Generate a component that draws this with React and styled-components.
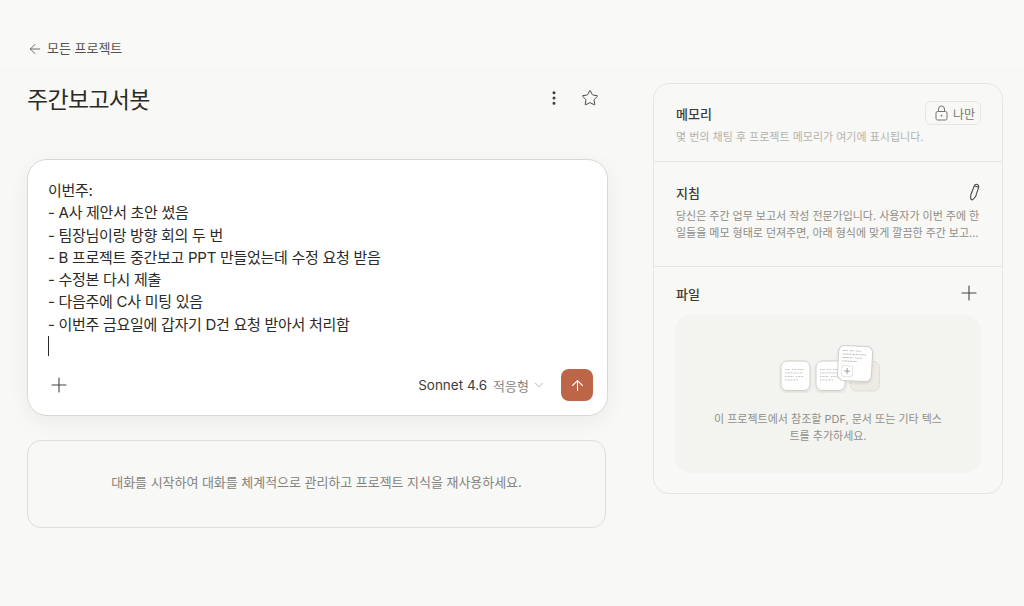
import React from "react";
import styled, { createGlobalStyle } from "styled-components";
import { ArrowLeft, MoreVertical, Star, Plus, ChevronDown, ArrowUp } from "lucide-react";

const Global = createGlobalStyle`
  html, body { margin: 0; padding: 0; background: #f8f8f6; overflow: hidden; }
  body { font-family: "Inter", "Noto Sans CJK KR", sans-serif; color: #2b2a27; }
  * { box-sizing: border-box; }
`;

const Page = styled.div`
  width: 1024px;
  height: 606px;
  overflow: hidden;
  background: #f8f8f6;
`;
const TopBar = styled.div`
  height: 68px;
  padding: 40px 27px 0 27px;
  background: #f9f9f7;
`;
const BackLink = styled.a`
  display: inline-flex;
  align-items: center;
  gap: 4px;
  font-size: 13px;
  line-height: 17px;
  letter-spacing: -0.02px;
  color: #55534e;
`;
const Columns = styled.div`
  display: grid;
  grid-template-columns: 581px 350px;
  column-gap: 45px;
  padding: 0 21px 0 27px;
  align-items: start;
`;
const Main = styled.main`
  display: flex;
  flex-direction: column;
  padding-top: 17px;
`;
const TitleRow = styled.div`
  display: flex;
  align-items: center;
  justify-content: space-between;
  height: 30px;
  margin-bottom: 44px;
`;
const Title = styled.h1`
  margin: 0;
  font-size: 23px;
  line-height: 30px;
  font-weight: 400;
  letter-spacing: -0.7px;
  color: #2b2a27;
`;
const TitleActions = styled.div`
  display: flex;
  align-items: center;
  gap: 18px;
  padding: 0 9px 4px 0;
  color: #3d3c38;
`;
const Composer = styled.section`
  height: 257px;
  background: #fff;
  border: 1px solid #d9d8d3;
  border-radius: 20px;
  box-shadow: 0 6px 22px rgba(0, 0, 0, 0.055);
  padding: 20px 14px 14px 20px;
  display: flex;
  flex-direction: column;
  justify-content: space-between;
`;
const Draft = styled.div`
  font-size: 15px;
  line-height: 22.3px;
  letter-spacing: -0.28px;
  color: #2b2a27;
  white-space: pre-line;
`;
const Caret = styled.span`
  display: block;
  width: 1px;
  height: 20px;
  background: #2b2a27;
`;
const ComposerBar = styled.div`
  display: flex;
  align-items: center;
  justify-content: space-between;
`;
const BarButton = styled.span`
  display: flex;
  margin-left: -1px;
  color: #45443f;
`;
const ModelGroup = styled.div`
  display: flex;
  align-items: center;
`;
const ModelName = styled.span`
  font-size: 13.5px;
  color: #3d3c38;
`;
const ModelMode = styled.span`
  font-size: 13px;
  color: #85837c;
  margin-left: 6px;
`;
const Chevron = styled.span`
  display: flex;
  color: #8b8982;
  margin: 0 15px 0 3px;
`;
const Send = styled.span`
  width: 32px;
  height: 32px;
  border-radius: 8px;
  background: #bd6647;
  color: #fff;
  display: flex;
  align-items: center;
  justify-content: center;
`;
const EmptyChats = styled.div`
  width: 579px;
  height: 88px;
  margin-top: 24px;
  padding-bottom: 5px;
  border: 1px solid #dfdeda;
  border-radius: 14px;
  display: flex;
  align-items: center;
  justify-content: center;
  font-size: 13px;
  letter-spacing: -0.04px;
  color: #85837c;
`;
const Panel = styled.aside`
  margin-top: 15px;
  height: 411px;
  border: 1px solid #e6e5e1;
  border-radius: 16px;
`;
const Section = styled.div`
  height: ${(p) => p.$h}px;
  padding: ${(p) => p.$pt}px 21px 0 22px;
  border-bottom: ${(p) => (p.$last ? "none" : "1px solid #e6e5e1")};
`;
const SectionHead = styled.div`
  display: flex;
  align-items: center;
  justify-content: space-between;
  height: 24px;
`;
const SectionTitle = styled.h2`
  margin: 0;
  font-size: 13px;
  font-weight: 500;
  color: #3d3c38;
`;
const Hint = styled.p`
  margin: 4px 0 0;
  font-size: 11px;
  line-height: 17px;
  color: #b5b3ac;
`;
const Instruction = styled.p`
  margin: 4px 0 0;
  font-size: 11px;
  line-height: 17px;
  letter-spacing: -0.03px;
  color: #8f8d86;
`;
const Badge = styled.span`
  display: flex;
  align-items: center;
  gap: 4px;
  height: 24px;
  width: 56px;
  padding-left: 8px;
  border: 1px solid #e6e5e1;
  border-radius: 6px;
  font-size: 12px;
  color: #77756e;
`;
const IconBtn = styled.span`
  display: flex;
  color: #45443f;
`;
const Dropzone = styled.div`
  height: 158px;
  margin: 10px 0 0 -1px;
  border-radius: 16px;
  background: #f3f3ef;
  display: flex;
  flex-direction: column;
  align-items: center;
  padding: 30px 0 0 0;
`;
const ArtWrap = styled.div`
  display: flex;
  padding-left: 4px;
`;
const DropText = styled.p`
  margin: 18px 0 0;
  width: 232px;
  text-align: center;
  font-size: 11px;
  line-height: 17px;
  color: #92908a;
`;

const LockIcon = () => (
  <svg width="15" height="16" viewBox="0 0 15 16" fill="none" stroke="currentColor" strokeWidth="1">
    <rect x="2" y="6.500" width="11" height="8.500" rx="1.500" />
    <path d="M4.500 6.500V4a3 3 0 0 1 6 0v2.500" />
    <circle cx="7.500" cy="10.700" r=".9" fill="currentColor" stroke="none" />
  </svg>
);

const PencilIcon = () => (
  <svg width="14" height="18" viewBox="0 0 14 18" fill="none" stroke="currentColor" strokeWidth="1.050" strokeLinejoin="round">
    <path d="M7.300 2.700c.5-1.100 1.700-1.600 2.900-1.200 1.200.4 1.800 1.600 1.400 2.800L8.600 13.600 5.400 17 3.700 16 3.800 11.800z" />
    <path d="M7.300 2.700l4.300 1.600" />
  </svg>
);

const DocLines = ({ x, y }) => (
  <g transform={`translate(${x} ${y})`}>
    <rect width="29" height="29.500" rx="6" fill="#fff" stroke="#cfcec9" strokeWidth="1" />
    <path d="M4 8.500h5M11 8.500h4M17 8.500h6M4 12h18M4 15.500h9M15 15.500h7M4 19h13" stroke="#c4c2bc" strokeWidth="1" strokeDasharray="1 .5" />
  </g>
);

const FilesArt = () => (
  <svg width="102" height="48" viewBox="0 0 102 48" fill="none">
    <defs>
      <filter id="s" x="-30%" y="-30%" width="160%" height="160%">
        <feDropShadow dx="0" dy="1.500" stdDeviation="1.800" floodOpacity="0.1" />
      </filter>
    </defs>
    <rect x="71.500" y="16.500" width="29" height="29.500" rx="6" fill="#eeebe5" stroke="#cfcdc6" strokeDasharray="1 1" />
    <g filter="url(#s)">
      <DocLines x={2} y={16} />
      <DocLines x={37} y={16} />
      <g transform="rotate(3 76 19)">
        <rect x="59" y="1" width="34" height="35" rx="6" fill="#fff" stroke="#cfcec9" />
        <path d="M63 6h5M70 6h4M76 6h5M63 9.500h24M63 13h11M76 13h7M63 16.500h15" stroke="#b5b3ac" strokeDasharray="1 .5" />
        <rect x="63" y="21" width="11" height="11" rx="3" fill="#fff" stroke="#e4e3de" />
        <path d="M68.500 23.500v6M65.500 26.500h6" stroke="#8f8d86" strokeWidth=".8" />
      </g>
    </g>
  </svg>
);

export default function App() {
  return (
    <Page>
      <Global />
      <TopBar>
        <BackLink>
          <ArrowLeft size={16} strokeWidth={1.25} />
          모든 프로젝트
        </BackLink>
      </TopBar>
      <Columns>
        <Main>
          <TitleRow>
            <Title>주간보고서봇</Title>
            <TitleActions>
              <MoreVertical size={18} strokeWidth={2} />
              <Star size={18} strokeWidth={1.25} />
            </TitleActions>
          </TitleRow>
          <Composer>
            <div>
              <Draft>{`이번주:
- A사 제안서 초안 썼음
- 팀장님이랑 방향 회의 두 번
- B 프로젝트 중간보고 PPT 만들었는데 수정 요청 받음
- 수정본 다시 제출
- 다음주에 C사 미팅 있음
- 이번주 금요일에 갑자기 D건 요청 받아서 처리함`}</Draft>
              <Caret />
            </div>
            <ComposerBar>
              <BarButton><Plus size={24} strokeWidth={1.1} /></BarButton>
              <ModelGroup>
                <ModelName>Sonnet 4.6</ModelName>
                <ModelMode>적응형</ModelMode>
                <Chevron><ChevronDown size={14} strokeWidth={1.1} /></Chevron>
                <Send><ArrowUp size={17} strokeWidth={1.5} /></Send>
              </ModelGroup>
            </ComposerBar>
          </Composer>
          <EmptyChats>대화를 시작하여 대화를 체계적으로 관리하고 프로젝트 지식을 재사용하세요.</EmptyChats>
        </Main>
        <Panel>
          <Section $h={78} $pt={17}>
            <SectionHead>
              <SectionTitle>메모리</SectionTitle>
              <Badge><LockIcon />나만</Badge>
            </SectionHead>
            <Hint>몇 번의 채팅 후 프로젝트 메모리가 여기에 표시됩니다.</Hint>
          </Section>
          <Section $h={105} $pt={18}>
            <SectionHead>
              <SectionTitle>지침</SectionTitle>
              <IconBtn><PencilIcon /></IconBtn>
            </SectionHead>
            <Instruction>당신은 주간 업무 보고서 작성 전문가입니다. 사용자가 이번 주에 한 일들을 메모 형태로 던져주면, 아래 형식에 맞게 깔끔한 주간 보고…</Instruction>
          </Section>
          <Section $h={226} $pt={14} $last>
            <SectionHead>
              <SectionTitle>파일</SectionTitle>
              <IconBtn><Plus size={24} strokeWidth={1.1} /></IconBtn>
            </SectionHead>
            <Dropzone>
              <ArtWrap><FilesArt /></ArtWrap>
              <DropText>이 프로젝트에서 참조할 PDF, 문서 또는 기타 텍스트를 추가하세요.</DropText>
            </Dropzone>
          </Section>
        </Panel>
      </Columns>
    </Page>
  );
}
